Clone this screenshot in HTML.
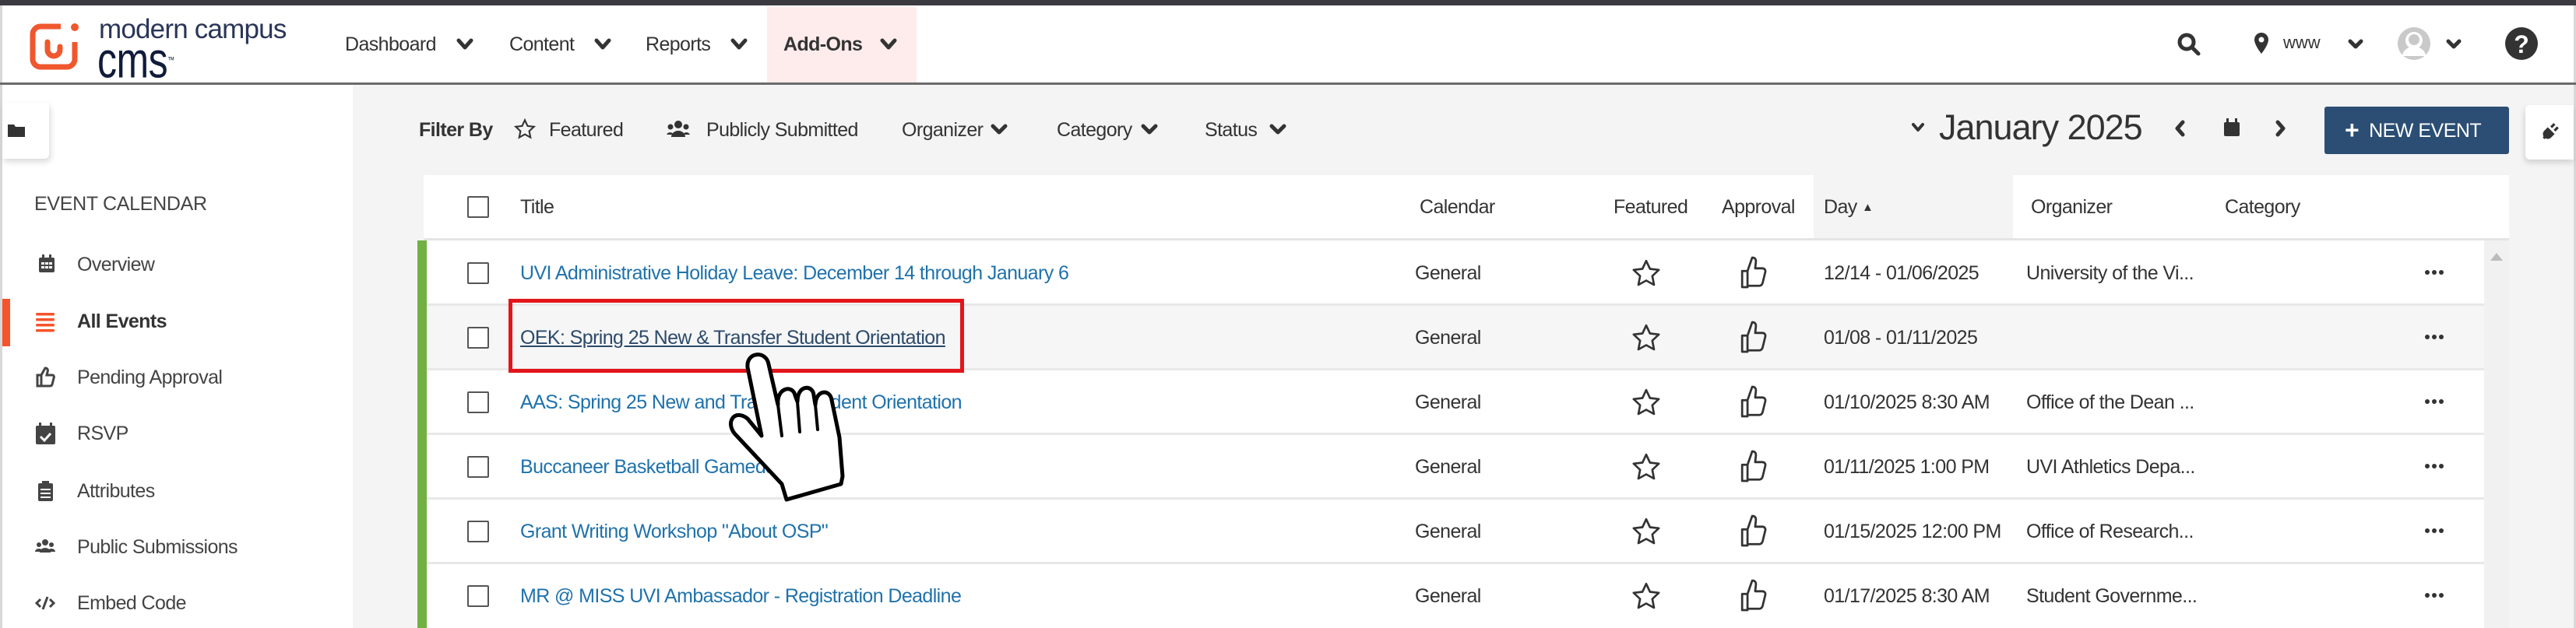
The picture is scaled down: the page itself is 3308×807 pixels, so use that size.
<!DOCTYPE html>
<html><head><meta charset="utf-8"><style>
*{margin:0;padding:0;box-sizing:border-box}
body{width:3308px;height:807px;overflow:hidden;background:#f4f4f4;font-family:"Liberation Sans",Arial,sans-serif;color:#333;position:relative}
.a{position:absolute;white-space:nowrap}
.t{font-size:25px;letter-spacing:-0.6px;line-height:30px}
.lnk{color:#1f72ac}
</style></head><body>
<!-- top bar -->
<div class="a" style="left:0;top:0;width:3308px;height:7px;background:#3a3a40"></div>
<div class="a" style="left:0;top:7px;width:3308px;height:101px;background:#fff;border-left:3px solid #d8d8d8;border-right:3px solid #d8d8d8"></div>
<div class="a" style="left:0;top:106px;width:3308px;height:3px;background:#6b6b6b"></div>
<!-- logo -->
<svg class="a" style="left:34px;top:24px" width="72" height="72" viewBox="0 0 72 72">
<path d="M44 10H18a10 10 0 0 0-10 10v32a10 10 0 0 0 10 10h34a10 10 0 0 0 10-10V30" fill="none" stroke="#f0572e" stroke-width="7"/>
<path d="M27 30v10a8 8 0 0 0 16 0v-4" fill="none" stroke="#f0572e" stroke-width="7" stroke-linecap="round"/>
<circle cx="62" cy="11" r="5" fill="#f0572e"/></svg>
<div class="a" style="left:127px;top:18px;font-size:35px;color:#2a3658;letter-spacing:-0.8px;line-height:40px">modern campus</div>
<div class="a" style="left:125px;top:57px;font-size:50px;color:#111c3a;letter-spacing:-0.5px;line-height:50px;transform:scaleY(1.3);transform-origin:0 41px">cms<span style="font-size:9px;vertical-align:top">™</span></div>
<!-- nav -->
<div class="a" style="left:985px;top:9px;width:192px;height:97px;background:#fdeceb"></div>
<div class="a t" style="left:443px;top:42px;color:#333">Dashboard</div>
<div class="a t" style="left:654px;top:42px">Content</div>
<div class="a t" style="left:829px;top:42px">Reports</div>
<div class="a t" style="left:1006px;top:42px;font-weight:bold">Add-Ons</div>
<svg class="a" style="left:0;top:0" width="3308" height="807">
<g fill="none" stroke="#333" stroke-width="5" stroke-linecap="round" stroke-linejoin="round">
<polyline points="589,52 597,61 605,52"/><polyline points="766,52 774,61 782,52"/><polyline points="941,52 949,61 957,52"/><polyline points="1133,52 1141,61 1149,52"/>
<polyline points="3018,53 3025,60 3032,53"/><polyline points="3144,53 3151,60 3158,53"/>
<polyline points="1275,162 1283,170 1291,162"/><polyline points="1468,162 1476,170 1484,162"/><polyline points="1633,162 1641,170 1649,162"/>
<polyline points="2457,160 2463,167 2469,160" stroke-width="4"/>
<polyline points="2803,157 2796,165 2803,173"/><polyline points="2925,157 2932,165 2925,173"/>
<circle cx="2808" cy="54" r="9" stroke-width="5"/><line x1="2815" y1="61" x2="2823" y2="69"/>
</g>
<path d="M2904 42a9 9 0 0 1 9 9c0 7-9 18-9 18s-9-11-9-18a9 9 0 0 1 9-9z" fill="#333"/><circle cx="2904" cy="51" r="3.5" fill="#fff"/>
<circle cx="3100" cy="56" r="21" fill="#c9c9c9"/><circle cx="3100" cy="52" r="11" fill="#fff"/><path d="M3085 72a15 12 0 0 1 30 0" fill="#fff"/><circle cx="3100" cy="51" r="7" fill="#c9c9c9"/>
<circle cx="3238" cy="56" r="21" fill="#333"/>
<text x="3238" y="68" font-family="Liberation Sans" font-weight="bold" font-size="32" fill="#fff" text-anchor="middle">?</text>
<rect x="2856" y="157" width="20" height="18" rx="2" fill="#333"/><rect x="2859" y="152" width="3" height="6" fill="#333"/><rect x="2870" y="152" width="3" height="6" fill="#333"/>
</svg>
<div class="a" style="left:2932px;top:42px;font-size:22px;color:#333">www</div>
<!-- sidebar -->
<div class="a" style="left:3px;top:109px;width:450px;height:698px;background:#fff"></div>
<div class="a" style="left:0;top:109px;width:3px;height:698px;background:#d8d8d8"></div>
<div class="a" style="left:3305px;top:109px;width:3px;height:698px;background:#d8d8d8"></div>
<div class="a" style="left:3px;top:132px;width:60px;height:72px;background:#fff;border-radius:0 6px 6px 0;box-shadow:2px 4px 8px rgba(0,0,0,.15)"></div>
<svg class="a" style="left:10px;top:158px" width="22" height="18"><path d="M0 2h8l2 3h12v13H0z" fill="#333"/></svg>
<div class="a" style="left:44px;top:248px;font-size:25px;color:#444;letter-spacing:-0.3px">EVENT CALENDAR</div>
<div class="a" style="left:3px;top:384px;width:10px;height:61px;background:#f5542c"></div>
<svg class="a" style="left:0;top:0" width="460" height="807">
<g fill="#444">
<rect x="50" y="331" width="20" height="19" rx="2"/><rect x="54" y="327" width="3" height="5"/><rect x="63" y="327" width="3" height="5"/>
<g fill="#fff"><rect x="53" y="337" width="4" height="3"/><rect x="58" y="337" width="4" height="3"/><rect x="63" y="337" width="4" height="3"/><rect x="53" y="342" width="4" height="3"/><rect x="58" y="342" width="4" height="3"/><rect x="63" y="342" width="4" height="3"/></g>
</g>
<g fill="#f5542c"><rect x="46" y="402" width="24" height="3.5" rx="1.5"/><rect x="46" y="409" width="24" height="3.5" rx="1.5"/><rect x="46" y="416" width="24" height="3.5" rx="1.5"/><rect x="46" y="423" width="24" height="3.5" rx="1.5"/></g>
<path d="M48 482h5v14h-5z M53 482l5-9c3 0 4 2 3 5l-1 4h7c2 0 3 2 2 4l-2 8c-.5 1.5-1.5 2-3 2H53" fill="none" stroke="#444" stroke-width="3"/>
<rect x="46" y="547" width="25" height="24" rx="2" fill="#444"/><rect x="50" y="543" width="3" height="6" fill="#444"/><rect x="64" y="543" width="3" height="6" fill="#444"/>
<polyline points="52,561 57,566 65,557" fill="none" stroke="#fff" stroke-width="3"/>
<rect x="49" y="621" width="19" height="23" rx="2" fill="#444"/><rect x="54" y="618" width="9" height="5" fill="#444"/>
<g fill="#fff"><rect x="52" y="628" width="13" height="2"/><rect x="52" y="633" width="13" height="2"/><rect x="52" y="638" width="13" height="2"/></g>
<circle cx="58" cy="697" r="4" fill="#444"/><circle cx="50" cy="700" r="3" fill="#444"/><circle cx="66" cy="700" r="3" fill="#444"/><path d="M51 710a7 6 0 0 1 14 0z M45 709a5 4 0 0 1 10 0z M61 709a5 4 0 0 1 10 0z" fill="#444"/>
<g fill="none" stroke="#444" stroke-width="3"><polyline points="52,770 47,775 52,780"/><polyline points="64,770 69,775 64,780"/><line x1="61" y1="767" x2="55" y2="783"/></g>
</svg>
<div class="a t" style="left:99px;top:325px;color:#444">Overview</div>
<div class="a t" style="left:99px;top:398px;color:#333;font-weight:bold">All Events</div>
<div class="a t" style="left:99px;top:470px;color:#444">Pending Approval</div>
<div class="a t" style="left:99px;top:542px;color:#444">RSVP</div>
<div class="a t" style="left:99px;top:616px;color:#444">Attributes</div>
<div class="a t" style="left:99px;top:688px;color:#444">Public Submissions</div>
<div class="a t" style="left:99px;top:760px;color:#444">Embed Code</div>
<!-- filter bar -->
<div class="a t" style="left:538px;top:152px;font-weight:bold">Filter By</div>
<svg class="a" style="left:660px;top:152px" width="28" height="28" viewBox="0 0 24 24"><path d="M12 2l3 6.5 7 .8-5.2 4.8 1.4 7L12 17.6 5.8 21.1l1.4-7L2 9.3l7-.8z" fill="none" stroke="#333" stroke-width="1.8"/></svg>
<div class="a t" style="left:705px;top:152px">Featured</div>
<svg class="a" style="left:856px;top:154px" width="30" height="24"><circle cx="15" cy="6" r="5" fill="#333"/><circle cx="5" cy="9" r="3.5" fill="#333"/><circle cx="25" cy="9" r="3.5" fill="#333"/><path d="M6 22a9 8 0 0 1 18 0z M0 19a5 5 0 0 1 9 0z M21 19a5 5 0 0 1 9 0z" fill="#333"/></svg>
<div class="a t" style="left:907px;top:152px">Publicly Submitted</div>
<div class="a t" style="left:1158px;top:152px">Organizer</div>
<div class="a t" style="left:1357px;top:152px">Category</div>
<div class="a t" style="left:1547px;top:152px">Status</div>
<div class="a" style="left:2490px;top:139px;font-size:45px;letter-spacing:-1px;color:#333;line-height:50px">January 2025</div>
<div class="a" style="left:2985px;top:137px;width:237px;height:61px;background:#2c4e74;border-radius:3px;color:#fff;font-size:25px;line-height:61px;padding-left:26px;letter-spacing:-0.5px"><b style="font-size:32px;vertical-align:-2px">+</b>&nbsp; NEW EVENT</div>
<div class="a" style="left:3243px;top:135px;width:62px;height:70px;background:#fff;border-radius:6px 0 0 6px;box-shadow:-1px 4px 8px rgba(0,0,0,.15)"></div>
<svg class="a" style="left:3262px;top:156px" width="26" height="26" viewBox="0 0 24 24"><path d="M4 20l4-4 M9 9l6 6-3 3a4 4 0 0 1-6-6z M13 7l4-4 M17 11l4-4" stroke="#333" stroke-width="3" fill="#333"/></svg>
<!-- table -->
<div class="a" style="left:544px;top:225px;width:2678px;height:582px;background:#fff"></div>
<div class="a" style="left:2329px;top:225px;width:256px;height:83px;background:#f4f4f4"></div>
<div class="a" style="left:544px;top:306px;width:2678px;height:3px;background:#e4e4e4"></div>
<div class="a" style="left:544px;top:391px;width:2646px;height:83px;background:#f6f6f6"></div>
<div class="a" style="left:536px;top:309px;width:12px;height:498px;background:#72b043"></div>
<div class="a" style="left:3190px;top:309px;width:32px;height:498px;background:#f1f1f1"></div>
<svg class="a" style="left:3196px;top:323px" width="20" height="14"><polygon points="10,2 18,12 2,12" fill="#bbb"/></svg>
<div class="a" style="left:600px;top:252px;width:28px;height:28px;border:2.5px solid #555;border-radius:2px;background:#fff"></div>
<div class="a t" style="left:668px;top:251px">Title</div>
<div class="a t" style="left:1823px;top:251px">Calendar</div>
<div class="a t" style="left:2072px;top:251px">Featured</div>
<div class="a t" style="left:2211px;top:251px">Approval</div>
<div class="a t" style="left:2342px;top:251px">Day <span style="font-size:15px;vertical-align:3px">▲</span></div>
<div class="a t" style="left:2608px;top:251px">Organizer</div>
<div class="a t" style="left:2857px;top:251px">Category</div>

<div id="rows"></div>
<script>
var R=[["UVI Administrative Holiday Leave: December 14 through January 6","12/14 - 01/06/2025","University of the Vi..."],
["OEK: Spring 25 New &amp; Transfer Student Orientation","01/08 - 01/11/2025",""],
["AAS: Spring 25 New and Transfer Student Orientation","01/10/2025 8:30 AM","Office of the Dean ..."],
["Buccaneer Basketball Gameday","01/11/2025 1:00 PM","UVI Athletics Depa..."],
["Grant Writing Workshop \"About OSP\"","01/15/2025 12:00 PM","Office of Research..."],
["MR @ MISS UVI Ambassador - Registration Deadline","01/17/2025 8:30 AM","Student Governme..."]];
var h="";
for(var i=0;i<6;i++){var c=351+83*i,t=c-15;
if(i<5)h+='<div class="a" style="left:548px;top:'+(c+39)+'px;width:2642px;height:3px;background:#e8e8e8"></div>';
h+='<div class="a" style="left:600px;top:'+(c-14)+'px;width:28px;height:28px;border:2.5px solid #555;border-radius:2px;background:#fff"></div>';
var st=i==1?'color:#2c4a6b;text-decoration:underline':'color:#1f72ac';
h+='<div class="a t" style="left:668px;top:'+t+'px;'+st+'">'+R[i][0]+'</div>';
h+='<div class="a t" style="left:1817px;top:'+t+'px">General</div>';
h+='<svg class="a" style="left:2094px;top:'+(c-20)+'px" width="40" height="40" viewBox="0 0 24 24"><path d="M12 2.5l2.9 6.2 6.8.8-5 4.7 1.3 6.8L12 17.7 6 21l1.3-6.8-5-4.7 6.8-.8z" fill="none" stroke="#333" stroke-width="1.6" stroke-linejoin="round"/></svg>';
h+='<svg class="a" style="left:2232px;top:'+(c-24)+'px" width="38" height="46" viewBox="0 0 22 26"><path d="M3 12h4v12H3z M7 12l3.5-10c2 0 3 1.3 2.7 3.3L12.7 10H18c1.7 0 2.6 1.4 2.2 2.8l-2 8.2c-.4 1.2-1.3 2-2.6 2H7" fill="none" stroke="#333" stroke-width="1.6" stroke-linejoin="round"/></svg>';
h+='<div class="a t" style="left:2342px;top:'+t+'px">'+R[i][1]+'</div>';
h+='<div class="a t" style="left:2602px;top:'+t+'px">'+R[i][2]+'</div>';
h+='<div class="a" style="left:3114px;top:'+(c-4)+'px;font-size:0"><span style="display:inline-block;width:6px;height:6px;border-radius:3px;background:#333;margin-right:3px"></span><span style="display:inline-block;width:6px;height:6px;border-radius:3px;background:#333;margin-right:3px"></span><span style="display:inline-block;width:6px;height:6px;border-radius:3px;background:#333"></span></div>';}
document.getElementById("rows").innerHTML=h;
</script>
<!-- red box -->
<div class="a" style="left:653px;top:384px;width:585px;height:95px;border:5px solid #e3151a"></div>
<!-- hand cursor -->
<svg class="a" style="left:0;top:0" width="3308" height="807">
<path d="M960 472 C958 452,984 450,987 468 L999 520 C997 498,1018 494,1021 508 L1024 516 C1024 494,1044 494,1045 508 L1047 520 C1048 500,1066 500,1068 514 L1078 562 L1082 612 L1080 622 L1010 642 L1004 622 L946 560 C930 545,942 524,960 538 L978 560 Z" fill="#fff" stroke="#000" stroke-width="5" stroke-linejoin="round"/>
<g stroke="#000" stroke-width="4" fill="none" stroke-linecap="round"><line x1="999" y1="520" x2="1004" y2="560"/><line x1="1024" y1="516" x2="1027" y2="555"/><line x1="1047" y1="520" x2="1050" y2="552"/></g>
</svg>
</body></html>
